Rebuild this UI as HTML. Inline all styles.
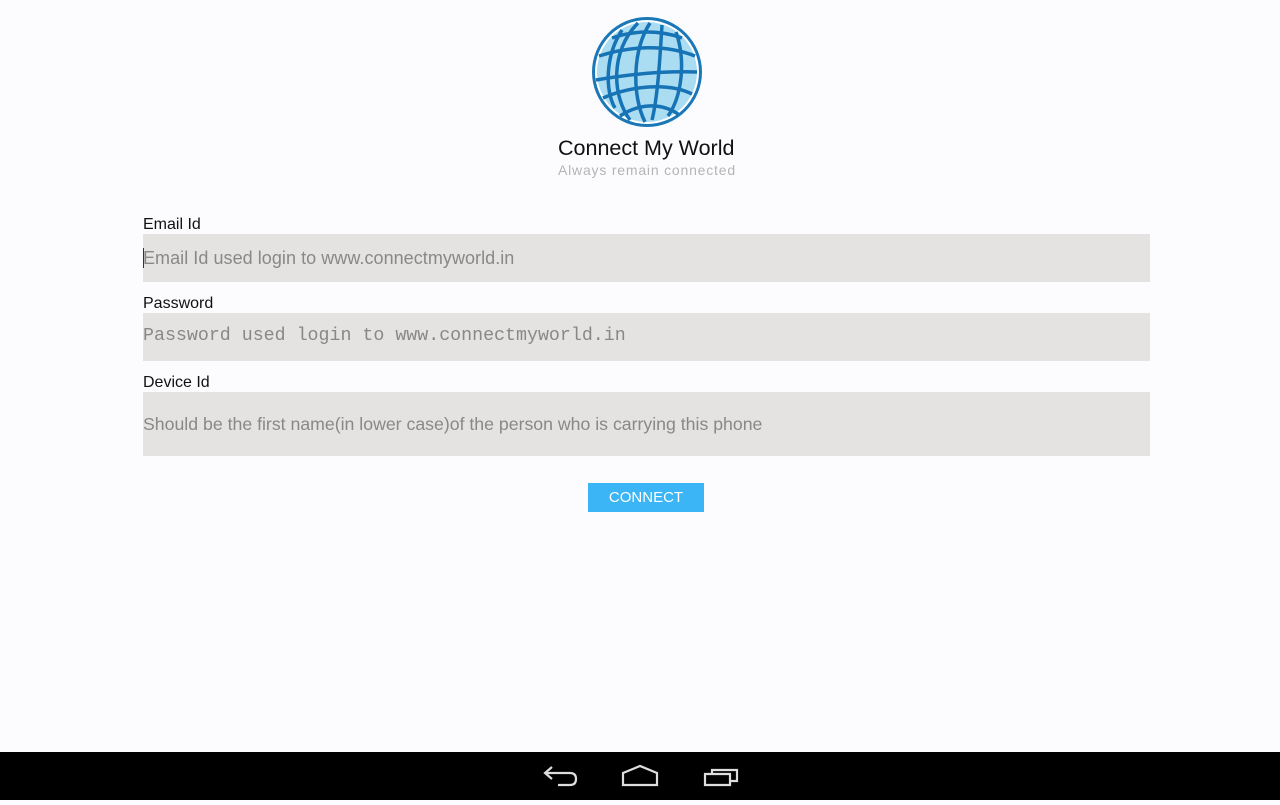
<!DOCTYPE html>
<html><head><meta charset="utf-8"><style>
body{margin:0;width:1280px;height:800px;background:#fcfbfd;font-family:"Liberation Sans",sans-serif;position:relative;overflow:hidden}
.t{position:absolute;white-space:nowrap}
.f{position:absolute;left:143px;width:1007px;background:#e4e3e1}
.nav{position:absolute;left:0;top:752px;width:1280px;height:48px;background:#000}
</style></head><body>
<svg class="t" style="left:590px;top:16px" width="114" height="114" viewBox="0 0 114 114">
<circle cx="57" cy="56" r="55" fill="#1a78b8"/>
<circle cx="57" cy="56" r="52" fill="#fff"/>
<circle cx="57" cy="56" r="50" fill="#aadcf2"/>
<g fill="none" stroke="#1673b5" stroke-width="3.5">
<path d="M48 7 C20 35 22 80 40 104"/>
<path d="M60 7 C42 35 42 80 55 106"/>
<path d="M72 9 C70 40 68 80 62 104"/>
<path d="M86 16 C96 45 92 80 78 100"/>
<path d="M32 14 C15 40 15 75 25 92"/>
<path d="M22 22 C45 14 70 14 92 22"/>
<path d="M9 40 C40 30 75 28 105 40"/>
<path d="M6 64 C40 58 75 55 107 56"/>
<path d="M13 82 C40 70 78 66 102 78"/>
<path d="M30 100 C48 88 70 86 88 98"/>
</g></svg>
<div class="t" style="left:558px;top:136px;font-size:21.5px;color:#111">Connect My World</div>
<div class="t" style="left:558px;top:162px;font-size:14px;letter-spacing:0.8px;color:#b5b5b5">Always remain connected</div>
<div class="t" style="left:143px;top:216px;font-size:16px;color:#111">Email Id</div>
<div class="f" style="top:234px;height:48px"></div>
<div style="position:absolute;left:143px;top:248px;width:1px;height:20px;background:#333"></div>
<div class="t" style="left:143px;top:248px;font-size:18px;color:#888;letter-spacing:0.05px">Email Id used login to www.connectmyworld.in</div>
<div class="t" style="left:143px;top:295px;font-size:16px;color:#111">Password</div>
<div class="f" style="top:313px;height:48px"></div>
<div class="t" style="left:143px;top:326px;font-size:18.3px;color:#888;font-family:'Liberation Mono',monospace">Password used login to www.connectmyworld.in</div>
<div class="t" style="left:143px;top:374px;font-size:16px;color:#111">Device Id</div>
<div class="f" style="top:392px;height:64px"></div>
<div class="t" style="left:143px;top:414px;font-size:17.7px;color:#888">Should be the first name(in lower case)of the person who is carrying this phone</div>
<div class="t" style="left:588px;top:483px;width:116px;height:29px;background:#3bb5f5;color:#fff;font-size:15px;text-align:center;line-height:29px">CONNECT</div>
<div class="nav">
<svg width="1280" height="48" fill="none" stroke="#ddd" stroke-width="2.2">
<path d="M552 15 L545 21 L552 27 M545 21 H570 Q576 21 576 27 Q576 33 570 33 H558"/>
<path d="M623 33 V21 L640 14 L657 21 V33 Z"/>
<path d="M705 22 H730 V33 H705 Z M712 22 V18 H737 V29 H731"/>
</svg></div>
</body></html>
